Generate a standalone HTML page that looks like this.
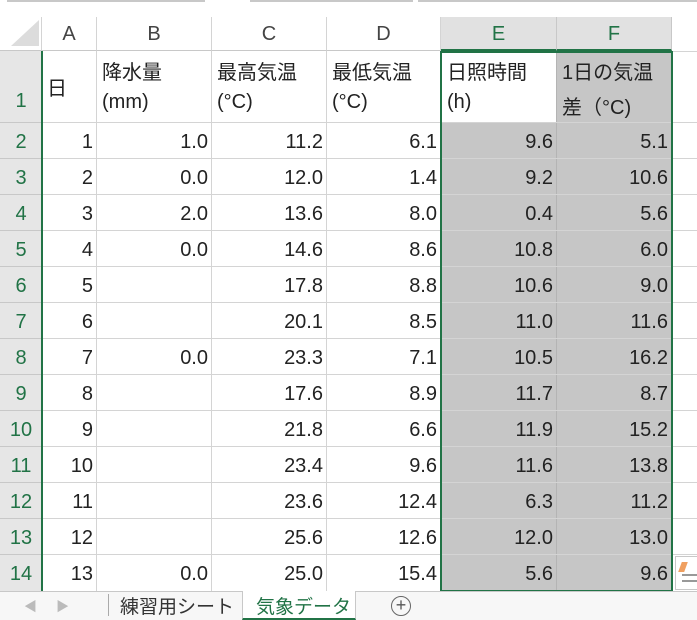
<!DOCTYPE html>
<html><head><meta charset="utf-8"><style>
body{margin:0;width:697px;height:620px;overflow:hidden;background:#fff;position:relative;font-family:"Liberation Sans","Noto Sans CJK JP",sans-serif;}
div{position:absolute;box-sizing:border-box;}
.c{font-size:20px;color:#222;white-space:nowrap;}
.r{text-align:right;padding-right:4px;line-height:38px;height:36px;}
.h{text-align:center;font-size:20px;color:#444;line-height:34px;top:17px;height:34px;}
.rn{left:0;width:42px;text-align:center;font-size:20px;color:#217346;background:#e6e6e6;border-bottom:1px solid #c8c8c8;}
</style></head><body>
<div style="left:7px;top:0;width:198px;height:2px;background:#c8c8c8"></div>
<div style="left:250px;top:0;width:163px;height:2px;background:#c8c8c8"></div>
<div style="left:418px;top:0;width:279px;height:2px;background:#c8c8c8"></div>
<div style="left:0;top:17px;width:42px;height:34px;background:#fff;border-right:1px solid #d4d4d4;border-bottom:1px solid #c8c8c8"></div>
<div style="left:11px;top:20px;width:0;height:0;border-left:28px solid transparent;border-bottom:26px solid #dcdcdc"></div>
<div style="left:42px;top:51px;width:631px;height:540px;background:#fff"></div>
<div style="left:441px;top:123px;width:231px;height:468px;background:#c6c6c6"></div>
<div style="left:557px;top:51px;width:115px;height:72px;background:#c6c6c6"></div>
<div class="h" style="left:42px;width:55px;border-right:1px solid #d4d4d4;border-bottom:1px solid #c8c8c8">A</div>
<div class="h" style="left:97px;width:115px;border-right:1px solid #d4d4d4;border-bottom:1px solid #c8c8c8">B</div>
<div class="h" style="left:212px;width:115px;border-right:1px solid #d4d4d4;border-bottom:1px solid #c8c8c8">C</div>
<div class="h" style="left:327px;width:114px;border-right:1px solid #d4d4d4;border-bottom:1px solid #c8c8c8">D</div>
<div class="h" style="left:441px;width:116px;background:#e1e1e1;color:#217346;border-right:1px solid #c8c8c8;border-bottom:2px solid #217346">E</div>
<div class="h" style="left:557px;width:115px;background:#e1e1e1;color:#217346;border-right:1px solid #c8c8c8;border-bottom:2px solid #217346">F</div>
<div style="left:672px;top:51px;width:25px;height:1px;background:#d4d4d4"></div>
<div style="left:96px;top:51px;width:1px;height:540px;background:#d4d4d4"></div>
<div style="left:211px;top:51px;width:1px;height:540px;background:#d4d4d4"></div>
<div style="left:326px;top:51px;width:1px;height:540px;background:#d4d4d4"></div>
<div style="left:556px;top:51px;width:1px;height:540px;background:#b4b4b4"></div>
<div style="left:42px;top:122px;width:655px;height:1px;background:#d4d4d4"></div>
<div style="left:42px;top:158px;width:655px;height:1px;background:#d4d4d4"></div>
<div style="left:42px;top:194px;width:655px;height:1px;background:#d4d4d4"></div>
<div style="left:42px;top:230px;width:655px;height:1px;background:#d4d4d4"></div>
<div style="left:42px;top:266px;width:655px;height:1px;background:#d4d4d4"></div>
<div style="left:42px;top:302px;width:655px;height:1px;background:#d4d4d4"></div>
<div style="left:42px;top:338px;width:655px;height:1px;background:#d4d4d4"></div>
<div style="left:42px;top:374px;width:655px;height:1px;background:#d4d4d4"></div>
<div style="left:42px;top:410px;width:655px;height:1px;background:#d4d4d4"></div>
<div style="left:42px;top:446px;width:655px;height:1px;background:#d4d4d4"></div>
<div style="left:42px;top:482px;width:655px;height:1px;background:#d4d4d4"></div>
<div style="left:42px;top:518px;width:655px;height:1px;background:#d4d4d4"></div>
<div style="left:42px;top:554px;width:655px;height:1px;background:#d4d4d4"></div>
<div class="rn" style="top:51px;height:72px;line-height:100px">1</div>
<div class="rn" style="top:123px;height:36px;line-height:38px">2</div>
<div class="rn" style="top:159px;height:36px;line-height:38px">3</div>
<div class="rn" style="top:195px;height:36px;line-height:38px">4</div>
<div class="rn" style="top:231px;height:36px;line-height:38px">5</div>
<div class="rn" style="top:267px;height:36px;line-height:38px">6</div>
<div class="rn" style="top:303px;height:36px;line-height:38px">7</div>
<div class="rn" style="top:339px;height:36px;line-height:38px">8</div>
<div class="rn" style="top:375px;height:36px;line-height:38px">9</div>
<div class="rn" style="top:411px;height:36px;line-height:38px">10</div>
<div class="rn" style="top:447px;height:36px;line-height:38px">11</div>
<div class="rn" style="top:483px;height:36px;line-height:38px">12</div>
<div class="rn" style="top:519px;height:36px;line-height:38px">13</div>
<div class="rn" style="top:555px;height:36px;line-height:38px;border-bottom:none">14</div>
<div style="left:41px;top:51px;width:2px;height:540px;background:#217346"></div>
<div class="c" style="left:47px;top:72px">日</div>
<div class="c" style="left:102px;top:56px">降水量</div><div class="c" style="left:102px;top:91px">(mm)</div>
<div class="c" style="left:217px;top:56px">最高気温</div><div class="c" style="left:217px;top:91px">(°C)</div>
<div class="c" style="left:332px;top:56px">最低気温</div><div class="c" style="left:332px;top:91px">(°C)</div>
<div class="c" style="left:447px;top:56px">日照時間</div><div class="c" style="left:447px;top:91px">(h)</div>
<div class="c" style="left:562px;top:56px">1日の気温</div><div class="c" style="left:562px;top:91px">差（°C)</div>
<div style="left:42px;top:123px;width:55px">
<div class="c r" style="position:relative">1</div><div class="c r" style="position:relative">2</div><div class="c r" style="position:relative">3</div><div class="c r" style="position:relative">4</div><div class="c r" style="position:relative">5</div><div class="c r" style="position:relative">6</div><div class="c r" style="position:relative">7</div><div class="c r" style="position:relative">8</div><div class="c r" style="position:relative">9</div><div class="c r" style="position:relative">10</div><div class="c r" style="position:relative">11</div><div class="c r" style="position:relative">12</div><div class="c r" style="position:relative">13</div></div>
<div style="left:97px;top:123px;width:115px">
<div class="c r" style="position:relative">1.0</div><div class="c r" style="position:relative">0.0</div><div class="c r" style="position:relative">2.0</div><div class="c r" style="position:relative">0.0</div><div class="c r" style="position:relative"></div><div class="c r" style="position:relative"></div><div class="c r" style="position:relative">0.0</div><div class="c r" style="position:relative"></div><div class="c r" style="position:relative"></div><div class="c r" style="position:relative"></div><div class="c r" style="position:relative"></div><div class="c r" style="position:relative"></div><div class="c r" style="position:relative">0.0</div></div>
<div style="left:212px;top:123px;width:115px">
<div class="c r" style="position:relative">11.2</div><div class="c r" style="position:relative">12.0</div><div class="c r" style="position:relative">13.6</div><div class="c r" style="position:relative">14.6</div><div class="c r" style="position:relative">17.8</div><div class="c r" style="position:relative">20.1</div><div class="c r" style="position:relative">23.3</div><div class="c r" style="position:relative">17.6</div><div class="c r" style="position:relative">21.8</div><div class="c r" style="position:relative">23.4</div><div class="c r" style="position:relative">23.6</div><div class="c r" style="position:relative">25.6</div><div class="c r" style="position:relative">25.0</div></div>
<div style="left:327px;top:123px;width:114px">
<div class="c r" style="position:relative">6.1</div><div class="c r" style="position:relative">1.4</div><div class="c r" style="position:relative">8.0</div><div class="c r" style="position:relative">8.6</div><div class="c r" style="position:relative">8.8</div><div class="c r" style="position:relative">8.5</div><div class="c r" style="position:relative">7.1</div><div class="c r" style="position:relative">8.9</div><div class="c r" style="position:relative">6.6</div><div class="c r" style="position:relative">9.6</div><div class="c r" style="position:relative">12.4</div><div class="c r" style="position:relative">12.6</div><div class="c r" style="position:relative">15.4</div></div>
<div style="left:441px;top:123px;width:116px">
<div class="c r" style="position:relative">9.6</div><div class="c r" style="position:relative">9.2</div><div class="c r" style="position:relative">0.4</div><div class="c r" style="position:relative">10.8</div><div class="c r" style="position:relative">10.6</div><div class="c r" style="position:relative">11.0</div><div class="c r" style="position:relative">10.5</div><div class="c r" style="position:relative">11.7</div><div class="c r" style="position:relative">11.9</div><div class="c r" style="position:relative">11.6</div><div class="c r" style="position:relative">6.3</div><div class="c r" style="position:relative">12.0</div><div class="c r" style="position:relative">5.6</div></div>
<div style="left:557px;top:123px;width:115px">
<div class="c r" style="position:relative">5.1</div><div class="c r" style="position:relative">10.6</div><div class="c r" style="position:relative">5.6</div><div class="c r" style="position:relative">6.0</div><div class="c r" style="position:relative">9.0</div><div class="c r" style="position:relative">11.6</div><div class="c r" style="position:relative">16.2</div><div class="c r" style="position:relative">8.7</div><div class="c r" style="position:relative">15.2</div><div class="c r" style="position:relative">13.8</div><div class="c r" style="position:relative">11.2</div><div class="c r" style="position:relative">13.0</div><div class="c r" style="position:relative">9.6</div></div>
<div style="left:440px;top:51px;width:233px;height:541px;border:2px solid #217346"></div>
<div style="left:675px;top:556px;width:22px;height:34px;border:1px solid #c8c8c8;border-right:none;background:#fff"></div>
<div style="left:680px;top:562px;width:6px;height:10px;background:#f0a060;transform:skewX(-20deg)"></div>
<div style="left:682px;top:574px;width:15px;height:2px;background:#999"></div>
<div style="left:682px;top:580px;width:15px;height:2px;background:#999"></div>
<div style="left:0;top:591px;width:697px;height:29px;background:#f7f7f7;border-top:1px solid #c8c8c8"></div>
<div class="c" style="left:24px;top:596px;font-size:13px;color:#bbb">◀</div>
<div class="c" style="left:56px;top:596px;font-size:13px;color:#bbb">▶</div>
<div style="left:108px;top:594px;width:1px;height:22px;background:#aaa"></div>
<div class="c" style="left:120px;top:592px;font-size:19px;color:#333">練習用シート</div>
<div style="left:242px;top:591px;width:114px;height:29px;background:#fff;border-bottom:2px solid #217346;border-left:1px solid #c8c8c8;border-right:1px solid #c8c8c8"></div>
<div class="c" style="left:256px;top:592px;font-size:19px;color:#217346">気象データ</div>
<div style="left:391px;top:596px;width:20px;height:20px;border:1.5px solid #666;border-radius:50%;text-align:center;line-height:17px;font-size:18px;color:#555">+</div>
</body></html>
